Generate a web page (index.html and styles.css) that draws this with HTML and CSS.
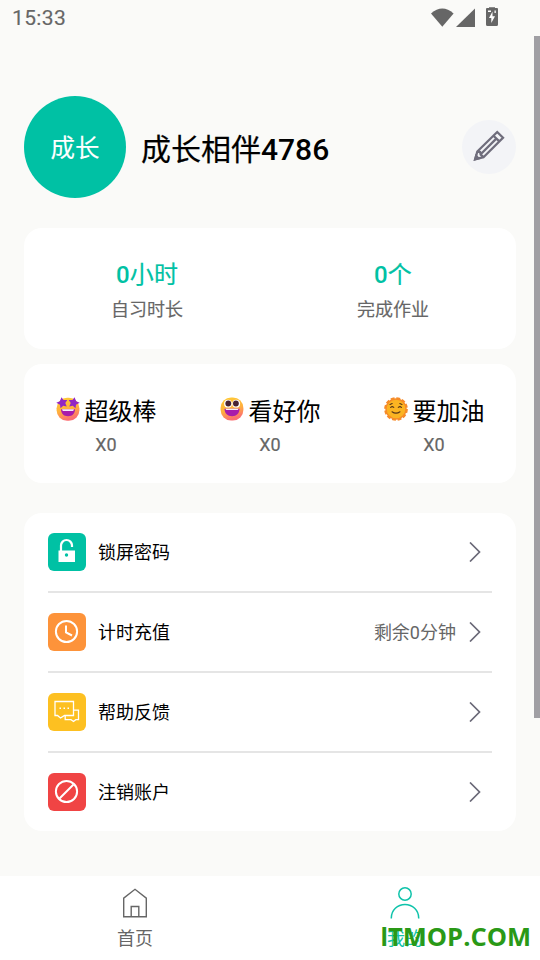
FILE: index.html
```html
<!DOCTYPE html>
<html lang="zh-CN">
<head>
<meta charset="utf-8">
<title>我的</title>
<link rel="stylesheet" href="styles.css">
</head>
<body>
<div class="app">
  <header class="status">
    <span class="clock">15:33</span>
    <svg class="signals" width="70" height="22" viewBox="0 0 70 22" fill="#666">
      <path d="M1 5.500Q12.300 -4.500 23.600 5.500L12.300 18.800z"/>
      <path d="M45 .5V19H26z"/>
      <path d="M57 0h2V-.8h6V0h2q1 0 1 1v15.500q0 1.500-1.500 1.500h-9q-1.500 0-1.500-1.500V1q0-1 1-1z"/>
      <path fill="#fff" d="M62.500 3.500L59 10h2.300v5l3.700-6.700h-2.500zM58 2.500h3V4h-3zM64.500 2.500h1.300V5h-1.300z"/>
    </svg>
  </header>
  <main class="content">
    <section class="profile">
      <div class="avatar">成长</div>
      <h1 class="name">成长相伴<b>4786</b></h1>
      <div class="edit">
        <svg width="54" height="54" viewBox="0 0 54 54" fill="none" stroke="#6f6d7c" stroke-width="2.300" stroke-linejoin="miter">
          <path d="M35.200 12L41 17.700 21.500 37.200 13.300 39.200 15.300 31.500zM31.500 15.700L37.300 21.400M15.300 31.500L18.100 32 18.700 34.600 21.500 37.200M18.700 34.300L34.300 18.600"/>
          <path d="M13.100 39.400l1-3.400 2.400 2.400z" fill="#6f6d7c"/>
        </svg>
      </div>
    </section>
    <section class="card stats">
      <div class="stat"><strong><b>0</b>小时</strong><span>自习时长</span></div>
      <div class="stat"><strong><b>0</b>个</strong><span>完成作业</span></div>
    </section>
    <section class="card badges">
      <div class="badge">
        <div class="badge-title">
          <svg width="24" height="24" viewBox="0 0 24 24">
            <defs><linearGradient id="face" x1="0" y1="0" x2=".3" y2="1"><stop offset="0" stop-color="#ffce35"/><stop offset=".6" stop-color="#ffb03c"/><stop offset="1" stop-color="#fc6f72"/></linearGradient></defs>
            <rect x=".6" y=".8" width="22.800" height="23" rx="10.500" fill="url(#face)"/>
            <path fill="#9226c4" d="M5.500.2L7.500 3 11.300 3 9.300 6.100 10.700 9.500 7.200 8.800 4.500 11.200 4 7.800.3 5.800 3.800 4.200zM18.500.2L16.500 3 12.700 3 14.700 6.100 13.300 9.500 16.800 8.800 19.500 11.200 20 7.800 23.700 5.800 20.200 4.200z"/>
            <path fill="#a81cab" d="M5 12.300H19C19 16.500 16.500 19.300 12 19.300S5 16.500 5 12.300z"/>
            <path fill="#f7eefb" d="M6 12.300H18L17.200 14H6.800z"/>
          </svg><span>超级棒</span></div>
        <span class="count">X0</span>
      </div>
      <div class="badge">
        <div class="badge-title">
          <svg width="24" height="24" viewBox="0 0 24 24">
            <rect x=".6" y=".4" width="22.800" height="23.200" rx="10.500" fill="url(#face)"/>
            <circle cx="8" cy="6.700" r="3.900" fill="#fff"/><circle cx="16.200" cy="6.700" r="3.900" fill="#fff"/>
            <circle cx="8.300" cy="6.500" r="2.900" fill="#482332"/><circle cx="15.900" cy="6.500" r="2.900" fill="#482332"/>
            <path fill="#a81cab" d="M4.500 11.800H19.500C19.300 16.500 16.500 19.300 12 19.300S4.700 16.500 4.500 11.800z"/>
            <path fill="#f7eefb" d="M5.500 11.800H18.500L17.800 13H6.200z"/>
          </svg><span>看好你</span></div>
        <span class="count">X0</span>
      </div>
      <div class="badge">
        <div class="badge-title">
          <svg width="24" height="24" viewBox="0 0 24 24">
            <circle cx="12" cy="12" r="10.700" fill="#f68b29" stroke="#f68b29" stroke-width="2.300" stroke-dasharray="3.800 1.802"/>
            <circle cx="12" cy="12" r="9.300" fill="#fbb422"/>
            <path d="M6 7.500l2.200-1M15.800 6.500l2.200 1M6.500 10.500q1.800-1.800 3.300 0M14.200 10.500q1.800-1.800 3.300 0M8 14.700q4 2.800 8 0" fill="none" stroke="#563619" stroke-width="1.050" stroke-linecap="round"/>
          </svg><span>要加油</span></div>
        <span class="count">X0</span>
      </div>
    </section>
    <nav class="card menu">
      <div class="row">
        <svg class="tile lock" viewBox="0 0 38 38">
          <path d="M13 18V12.500a5.500 5.500 0 0 1 11 0V14" fill="none" stroke="#fff" stroke-width="2.200"/>
          <path d="M10.500 17.500h16.500v11.500H10.500z" fill="#fff"/><circle cx="18.500" cy="22" r="1.700" fill="#00c1a4"/>
        </svg>
        <span class="label">锁屏密码</span>
        <svg class="chevron" viewBox="0 0 12 20"><path d="M1 .5L10.500 10 1 19.500"/></svg>
      </div>
      <div class="row">
        <svg class="tile clock-tile" viewBox="0 0 38 38" fill="none" stroke="#fff" stroke-width="2"><circle cx="18.500" cy="18.500" r="10.600"/><path d="M18 12.500V19.500L24 22.500"/></svg>
        <span class="label">计时充值</span><span class="remain">剩余0分钟</span>
        <svg class="chevron" viewBox="0 0 12 20"><path d="M1 .5L10.500 10 1 19.500"/></svg>
      </div>
      <div class="row">
        <svg class="tile chat" viewBox="0 0 38 38" fill="none" stroke="#fff" stroke-width="1.300"><path d="M7 8.500h18.500v14H16.500L12.500 25 9.500 22.500H7zM25.500 17.200h5v9.500h-2.700L25.500 28.500 23 26.700h-5.800V22.500"/><path d="M11.500 15.300h1.500M15.500 15.300h1.500M19.500 15.300h1.500" stroke-width="1.600"/></svg>
        <span class="label">帮助反馈</span>
        <svg class="chevron" viewBox="0 0 12 20"><path d="M1 .5L10.500 10 1 19.500"/></svg>
      </div>
      <div class="row">
        <svg class="tile cancel" viewBox="0 0 38 38" fill="none" stroke="#fff" stroke-width="2"><circle cx="18.500" cy="18.500" r="10.600"/><path d="M11.500 25.500L25.500 11.500"/></svg>
        <span class="label">注销账户</span>
        <svg class="chevron" viewBox="0 0 12 20"><path d="M1 .5L10.500 10 1 19.500"/></svg>
      </div>
    </nav>
  </main>
  <footer class="tabs">
    <div class="tab">
      <svg width="32" height="34" viewBox="0 0 32 34" fill="none" stroke="#666" stroke-width="1.400"><path d="M4.700 30.700V12.200L16 3.300 27.300 12.200V30.700zM12.200 30.700V20.500h7.600v10.200"/></svg>
      <span>首页</span>
    </div>
    <div class="tab active">
      <svg width="32" height="34" viewBox="0 0 32 34" fill="none" stroke="#0fc3aa" stroke-width="1.500"><circle cx="16" cy="8" r="6.200"/><path d="M2.300 32.500V32C2.300 24 8.500 18.400 16 18.400S29.700 24 29.700 32v.5"/></svg>
      <span>我的</span>
    </div>
  </footer>
  <div class="scrollbar"></div>
  <div class="watermark"><span>I</span>TMOP.COM</div>
</div>
</body>
</html>
```
FILE: styles.css
```css
* { box-sizing: border-box; }
body { margin: 0; background: #fafaf8; color: #000; font-family: Roboto, "Noto Sans CJK SC", sans-serif; }
b { font-weight: 500; -webkit-text-stroke: 0; }
svg { display: block; flex: none; }
.app { position: relative; width: 540px; height: 960px; display: flex; flex-direction: column; overflow: hidden; }
.status { height: 36px; padding: 8px 40px 0 12px; display: flex; justify-content: space-between; }
.clock { font-size: 21px; line-height: 21px; color: #666; letter-spacing: .35px; -webkit-text-stroke: .15px #666; }
.signals { overflow: visible; }
.content { flex: 1; padding: 60px 24px 0; }
.profile { height: 102px; display: flex; align-items: center; margin-bottom: 30px; }
.avatar { width: 102px; height: 102px; border-radius: 50%; background: #00c1a4; color: #fff; font-size: 24.500px; display: flex; align-items: center; justify-content: center; padding-bottom: 2px; -webkit-text-stroke: .1px; }
.name { margin: 5px 0 0 15px; font-size: 30px; line-height: 40px; font-weight: 400; -webkit-text-stroke: .2px; }
.edit { margin-left: auto; width: 54px; height: 54px; border-radius: 50%; background: #f3f4f7; }
.card { background: #fff; border-radius: 18px; }
.stats { height: 121px; display: grid; grid-template-columns: 1fr 1fr; padding-top: 32px; margin-bottom: 15px; }
.stat { display: flex; flex-direction: column; align-items: center; }
.stat strong { font-size: 24px; line-height: 30px; font-weight: 400; letter-spacing: .2px; color: #00c1a4; -webkit-text-stroke: .2px; }
.stat span { margin-top: 8px; font-size: 18px; line-height: 24px; color: #666; -webkit-text-stroke: .15px; }
.badges { height: 119px; display: grid; grid-template-columns: repeat(3, 1fr); padding-top: 31px; margin-bottom: 30px; }
.badge { display: flex; flex-direction: column; align-items: center; }
.badge-title { display: flex; align-items: center; gap: 5px; height: 32px; font-size: 24px; line-height: 32px; }
.badge-title svg { margin-top: -5px; }
.badge-title span { padding-top: 1px; }
.count { margin-top: 7px; font-size: 18px; line-height: 22px; color: #666; -webkit-text-stroke: .2px; }
.menu { height: 318px; padding: 0 24px; }
.row { height: 80px; display: flex; align-items: center; padding: 0 11px 0 0; border-bottom: 2px solid #e5e5e5; }
.row:last-child { height: 78px; border-bottom: 0; }
.tile { width: 38px; height: 38px; border-radius: 6px; margin-right: 12px; }
.lock { background: #00c1a4; }
.clock-tile { background: #fd933a; }
.chat { background: #fdc021; }
.cancel { background: #f04444; }
.label, .remain { font-size: 18px; line-height: 26px; padding-top: 2px; }
.remain { margin-left: auto; margin-right: 13px; color: #666; }
.chevron { width: 12px; height: 20px; margin-left: auto; fill: none; stroke: #6b6978; stroke-width: 1.7; }
.remain + .chevron { margin-left: 0; }
.tabs { height: 84px; background: #fff; display: grid; grid-template-columns: 1fr 1fr; }
.tab { display: flex; flex-direction: column; align-items: center; padding-top: 10px; font-size: 18px; line-height: 24px; color: #666; }
.tab span { margin-top: 7px; }
.tab.active { color: #0fc3aa; }
.scrollbar { position: absolute; right: 0; top: 36px; width: 6px; height: 682px; background: #a09fa4; }
.watermark { position: absolute; right: 9px; top: 919px; font: 700 25.500px/34px "Open Sans", sans-serif; color: #2a9916; white-space: nowrap; }
.watermark span { font-family: Roboto, sans-serif; }
```
